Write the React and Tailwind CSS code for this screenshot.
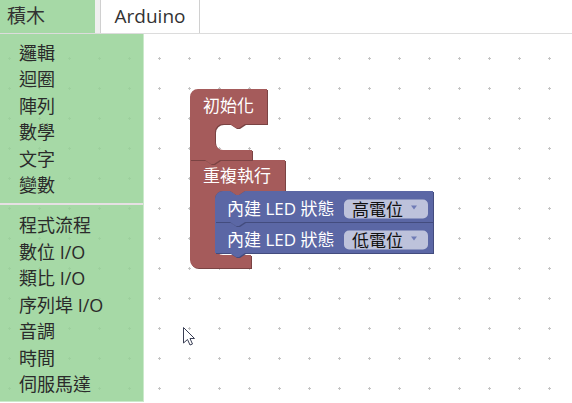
import React from "react";

const items1 = ["邏輯", "迴圈", "陣列", "數學", "文字", "變數"];
const items2 = ["程式流程", "數位 I/O", "類比 I/O", "序列埠 I/O", "音調", "時間", "伺服馬達"];

const red = { fill: "#a55b5b", dark: "#7a4343", light: "#c28e8e" };
const blue = { fill: "#5b67a5", dark: "#434c7e", light: "#8d96c4" };

function Shape({ d, c }) {
  return (
    <g>
      <path d={d} fill={c.dark} transform="translate(1,1)" />
      <path d={d} fill={c.fill} />
    </g>
  );
}

const B1 =
  "M190,97 A8,8 0 0 1 198,89 H267 V124 H245 l-6,4 -3,0 -6,-4 H223 a8,8 0 0 0 -8,8 V142 a8,8 0 0 0 8,8 H252 V160 H220 l-6,4 -3,0 -6,-4 H190 Z";
const B2 =
  "M190,160 H205 l6,4 3,0 6,-4 H285 V191 H245 l-6,4 -3,0 -6,-4 H223 a8,8 0 0 0 -8,8 V247 a8,8 0 0 0 8,8 H251 V268 H198 a8,8 0 0 1 -8,-8 Z";
const U1 =
  "M215,199 A8,8 0 0 1 223,191 H230 l6,4 3,0 6,-4 H433 V222 H245 l-6,4 -3,0 -6,-4 H215 Z";
const U2 =
  "M215,222 H230 l6,4 3,0 6,-4 H433 V253 H245 l-6,4 -3,0 -6,-4 H215 Z";

function LedRow({ y, label }) {
  return (
    <g>
      <text x="227" y={y} fill="#fff" fontSize="17" dominantBaseline="central">
        內建 LED 狀態
      </text>
      <rect x="344" y={y - 9} width="84" height="19" rx="5" fill="#fff" fillOpacity="0.6" />
      <text x="352" y={y + 0.5} fill="#111" fontSize="17" dominantBaseline="central">
        {label}
      </text>
      <polygon points={`411,${y - 3} 417,${y - 3} 414,${y + 1}`} fill="#6f7bb6" />
    </g>
  );
}

export default function App() {
  return (
    <div className="relative w-[572px] h-[403px] overflow-hidden bg-white font-['Open_Sans','Noto_Sans_CJK_TC',sans-serif]">
      <svg className="absolute inset-0" width="572" height="403">
        <defs>
          <pattern id="grid" patternUnits="userSpaceOnUse" x="-6" y="13" width="30" height="30">
            <rect x="14" y="15" width="3" height="1" fill="#c4c4c4" />
            <rect x="15" y="14" width="1" height="3" fill="#c4c4c4" />
          </pattern>
        </defs>
        <rect width="572" height="403" fill="url(#grid)" />
        <Shape d={B2} c={red} />
        <Shape d={B1} c={red} />
        <text x="203" y="105" fill="#fff" fontSize="17" dominantBaseline="central">
          初始化
        </text>
        <text x="203" y="175" fill="#fff" fontSize="17" dominantBaseline="central">
          重複執行
        </text>
        <Shape d={U2} c={blue} />
        <Shape d={U1} c={blue} />
        <LedRow y={208.5} label="高電位" />
        <LedRow y={239.5} label="低電位" />
        <path
          d="M183.5,327.5 L183.5,343 L187.5,339.5 L190,345 L192.5,344 L190,338.5 L194.5,338.5 Z"
          fill="#fff"
          stroke="#3a3f55"
          strokeWidth="1"
        />
      </svg>
      <div className="relative flex flex-col">
        <div className="flex h-[34px] border-b border-[#dcdcdc] bg-white">
          <div className="w-[95px] bg-[#a6d9a6] flex items-center pl-[7px] text-[19px] text-[#333]">積木</div>
          <div className="w-[5px] bg-[#f0f0f0]" />
          <div className="w-[100px] border-x border-[#d0d0d0] flex items-center justify-center text-[19px] text-[#333]">
            Arduino
          </div>
        </div>
        <div className="w-[144px] h-[368px] bg-[rgba(150,210,150,0.85)] border-r border-b border-[#cbe9cb] pt-[6px] text-[18px] text-[#2b2b2b]">
          {items1.map((t) => (
            <div key={t} className="h-[26.5px] flex items-center pl-[19px] whitespace-nowrap">
              {t}
            </div>
          ))}
          <div className="mt-[4px] mb-[7.5px] h-[2px] bg-[#e6e0e3]" />
          {items2.map((t) => (
            <div key={t} className="h-[26.5px] flex items-center pl-[19px] whitespace-nowrap">
              {t}
            </div>
          ))}
        </div>
      </div>
    </div>
  );
}
